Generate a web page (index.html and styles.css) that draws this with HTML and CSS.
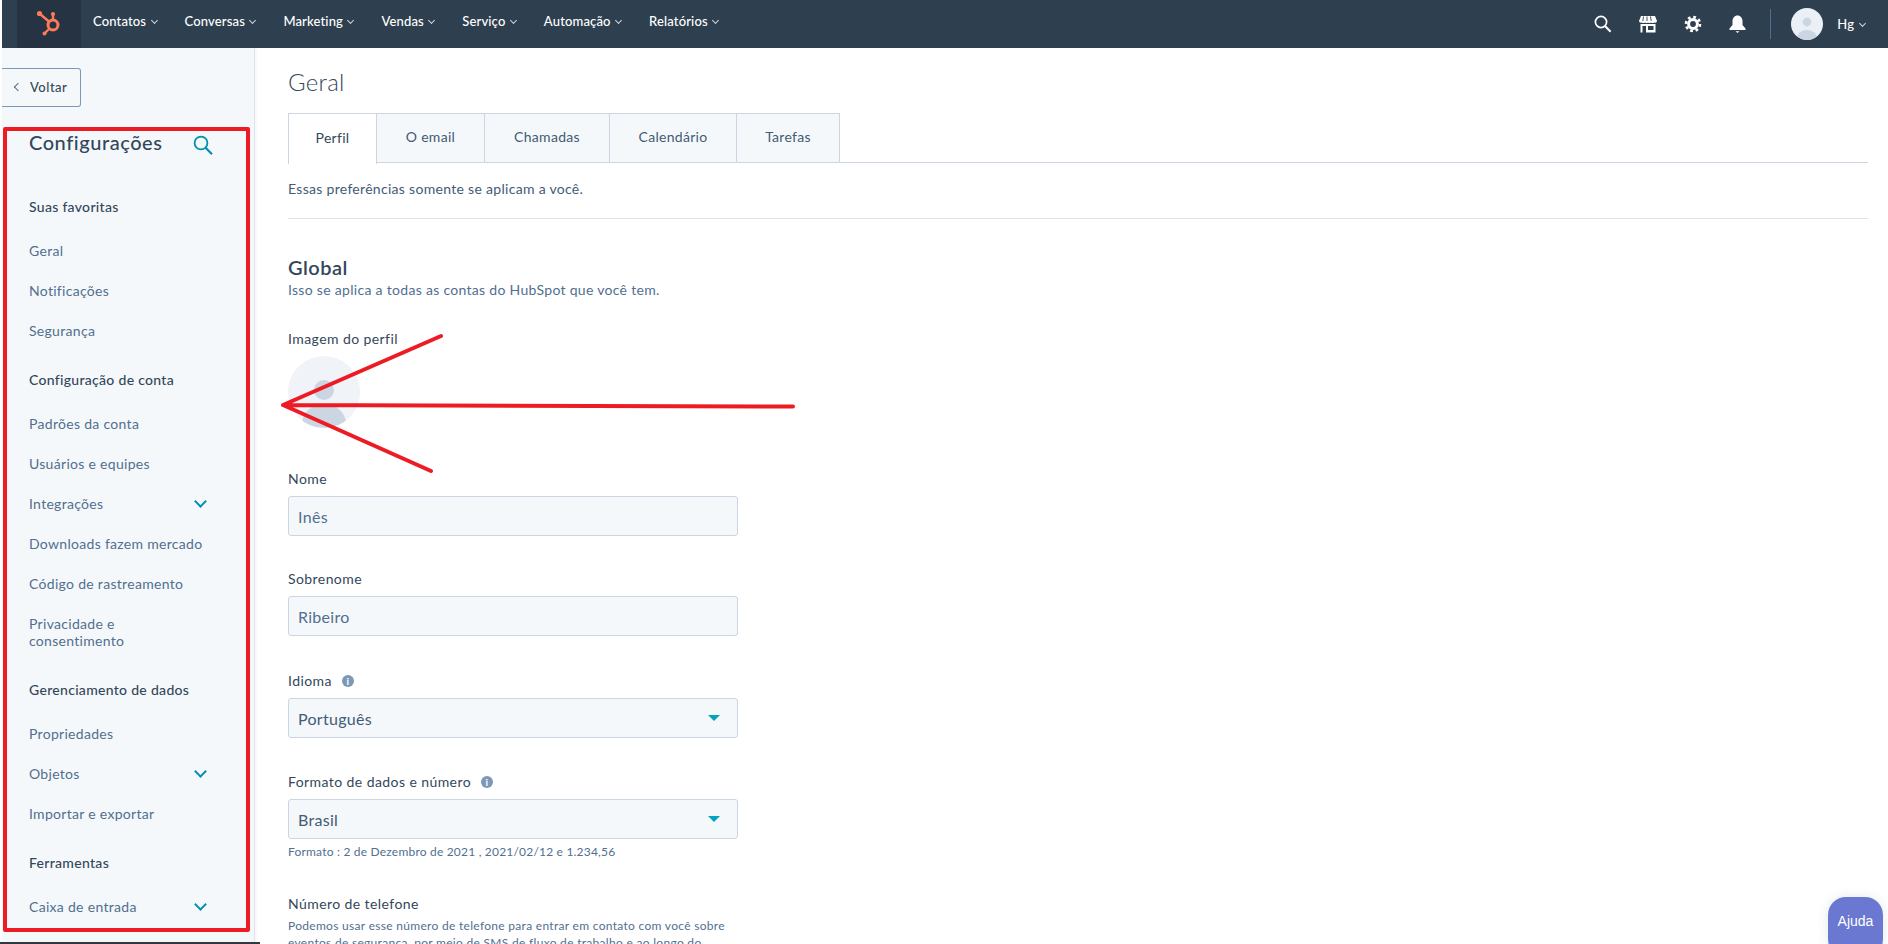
FILE: index.html
```html
<!DOCTYPE html>
<html lang="pt-BR">
<head>
  <meta charset="UTF-8" />
  <title>Geral</title>
  <link rel="stylesheet" href="styles.css">
</head>
<body>
  <header class="topbar">
    <div class="logo">
      <svg width="28" height="28" viewBox="0 0 28 28">
        <g stroke="#ff7a59" fill="none" stroke-width="2.4">
          <circle cx="17" cy="15" r="5" stroke-width="3"/>
          <path d="M4 4 L13 11.5 M17 4 V10 M9 23 L13.5 18.5"/>
        </g>
        <g fill="#ff7a59">
          <circle cx="3.5" cy="3.5" r="2.6"/>
          <circle cx="17" cy="4" r="2.1"/>
          <circle cx="8.5" cy="23.5" r="2"/>
        </g>
      </svg>
    </div>
    <nav class="mainnav">
      <a>Contatos <i class="caret"></i></a>
      <a>Conversas <i class="caret"></i></a>
      <a>Marketing <i class="caret"></i></a>
      <a>Vendas <i class="caret"></i></a>
      <a>Serviço <i class="caret"></i></a>
      <a>Automação <i class="caret"></i></a>
      <a>Relatórios <i class="caret"></i></a>
    </nav>
    <div class="tools">
      <svg class="tool" width="18" height="18" viewBox="0 0 18 18" fill="none" stroke="#fff" stroke-width="1.7">
        <circle cx="7" cy="7" r="5.6"/>
        <path d="M11 11 L16.6 16.8" stroke-width="2"/>
      </svg>
      <svg class="tool" width="18" height="17" viewBox="0 0 18 17" fill="#fff">
        <path d="M2 0 H16 L18 5 A2 2 0 0 1 15 6.4 A2.2 2.2 0 0 1 12 6.4 A2.2 2.2 0 0 1 9 6.4 A2.2 2.2 0 0 1 6 6.4 A2.2 2.2 0 0 1 3 6.4 A2 2 0 0 1 0 5 Z"/>
        <path d="M1.5 8 H16.5 V16.5 H1.5 Z M3.5 10 V16.5 H7 V10 Z M9 10 V14 H14.5 V10 Z" fill-rule="evenodd"/>
        <path d="M4.5 0.5 L3.8 5 M8 0.5 V5 M11.5 0.5 L12.2 5" stroke="#2e3f50" stroke-width="0.9"/>
      </svg>
      <svg class="tool" width="18" height="18" viewBox="0 0 18 18" fill="none" stroke="#fff">
        <circle cx="9" cy="9" r="4.4" stroke-width="3"/>
        <circle cx="9" cy="9" r="7" stroke-width="2.6" stroke-dasharray="2.8 2.7"/>
      </svg>
      <svg class="tool" width="17" height="19" viewBox="0 0 17 19" fill="#fff">
        <path d="M8.5 0.5 C11.5 0.5 13.5 3 13.5 6 V10 L16.5 13.6 V15 H0.5 V13.6 L3.5 10 V6 C3.5 3 5.5 0.5 8.5 0.5 Z"/>
        <path d="M6.5 16.3 H10.5 L8.5 18 Z"/>
      </svg>
      <span class="tools-sep"></span>
      <svg class="user-pic" width="32" height="32" viewBox="0 0 32 32">
        <defs><clipPath id="userclip"><circle cx="16" cy="16" r="16"/></clipPath></defs>
        <circle cx="16" cy="16" r="16" fill="#eaf0f6"/>
        <g clip-path="url(#userclip)" fill="#cbd6e2">
          <circle cx="16" cy="14" r="4.4"/>
          <ellipse cx="16" cy="30" rx="10" ry="8"/>
        </g>
      </svg>
      <span class="user-name">Hg <i class="caret"></i></span>
    </div>
  </header>

  <div class="layout">
    <aside class="sidebar">
      <a class="back"><i class="back-arrow"></i>Voltar</a>
      <div class="side-title">
        <h2>Configurações</h2>
        <svg width="20" height="20" viewBox="0 0 20 20" fill="none" stroke="#0091ae" stroke-width="1.8">
          <circle cx="8" cy="8" r="6.4"/>
          <path d="M12.6 12.8 L19 19.2" stroke-width="2.2"/>
        </svg>
      </div>
      <h3 class="side-head first">Suas favoritas</h3>
      <a class="side-item">Geral</a>
      <a class="side-item">Notificações</a>
      <a class="side-item">Segurança</a>
      <h3 class="side-head">Configuração de conta</h3>
      <a class="side-item">Padrões da conta</a>
      <a class="side-item">Usuários e equipes</a>
      <a class="side-item">Integrações <i class="side-caret"></i></a>
      <a class="side-item">Downloads fazem mercado</a>
      <a class="side-item">Código de rastreamento</a>
      <a class="side-item">Privacidade e<br>consentimento</a>
      <h3 class="side-head">Gerenciamento de dados</h3>
      <a class="side-item">Propriedades</a>
      <a class="side-item">Objetos <i class="side-caret"></i></a>
      <a class="side-item">Importar e exportar</a>
      <h3 class="side-head">Ferramentas</h3>
      <a class="side-item">Caixa de entrada <i class="side-caret"></i></a>
      <a class="side-item">Marketing</a>
    </aside>

    <main class="content">
      <h1 class="page-title">Geral</h1>
      <div class="tabs">
        <button class="tab active">Perfil</button>
        <button class="tab tab-email">O email</button>
        <button class="tab tab-calls">Chamadas</button>
        <button class="tab tab-cal">Calendário</button>
        <button class="tab tab-tasks">Tarefas</button>
      </div>
      <p class="note">Essas preferências somente se aplicam a você.</p>
      <hr class="rule">

      <h2 class="section-title">Global</h2>
      <p class="section-sub">Isso se aplica a todas as contas do HubSpot que você tem.</p>

      <div class="label">Imagem do perfil</div>
      <svg class="avatar" width="72" height="72" viewBox="0 0 72 72">
        <defs><clipPath id="avatarclip"><circle cx="36" cy="36" r="36"/></clipPath></defs>
        <circle cx="36" cy="36" r="36" fill="#f0f3f8"/>
        <g clip-path="url(#avatarclip)" fill="#cbd6e2">
          <circle cx="36" cy="34" r="10"/>
          <ellipse cx="36" cy="68" rx="22" ry="20"/>
        </g>
      </svg>

      <div class="field field-first">
        <div class="label">Nome</div>
        <div class="input">Inês</div>
      </div>
      <div class="field field-second">
        <div class="label">Sobrenome</div>
        <div class="input">Ribeiro</div>
      </div>
      <div class="field">
        <div class="label">Idioma <i class="info">i</i></div>
        <div class="input select">Português <i class="select-caret"></i></div>
      </div>
      <div class="field">
        <div class="label">Formato de dados e número <i class="info">i</i></div>
        <div class="input select">Brasil <i class="select-caret"></i></div>
        <div class="hint">Formato : 2 de Dezembro de 2021 , 2021/02/12 e 1.234,56</div>
      </div>
      <div class="field phone">
        <div class="label">Número de telefone</div>
        <p class="hint-block">Podemos usar esse número de telefone para entrar em contato com você sobre<br>eventos de segurança, por meio de SMS de fluxo de trabalho e ao longo do</p>
      </div>
    </main>
  </div>

  <div class="taskbar"></div>
  <button class="help">Ajuda</button>

  <!-- red markup drawn over the screenshot -->
  <div class="markup-box"></div>
  <svg class="markup-arrow" width="540" height="150" viewBox="0 0 540 150" fill="none" stroke="#ed1c24" stroke-width="4" stroke-linecap="round">
    <path d="M164 5 L6 74 L516 75.5 M6 74 L154 140"/>
  </svg>
</body>
</html>
```

FILE: styles.css
```css
* {
  box-sizing: border-box;
}
html, body {
  height: 944px;
  overflow: hidden;
}
body {
  margin: 0;
  padding-left: 2px;
  background: #fff;
  color: #33475b;
  font-family: "Lato", "Open Sans", sans-serif;
  font-size: 14px;
  letter-spacing: 0.3px;
}
i {
  font-style: normal;
}

/* top bar */
.topbar {
  display: flex;
  align-items: center;
  height: 48px;
  padding-left: 15px;
  background: #2e3f50;
  color: #fff;
}
.logo {
  display: flex;
  align-items: center;
  justify-content: center;
  width: 64px;
  height: 48px;
  background: #253342;
}
.logo svg {
  margin-left: 2px;
}
.mainnav {
  display: flex;
  margin-left: 12px;
  padding-bottom: 6px;
  font-size: 13px;
  font-weight: 500;
  letter-spacing: 0.15px;
}
.mainnav a {
  margin-right: 26px;
  white-space: nowrap;
}
.caret {
  display: inline-block;
  width: 5px;
  height: 5px;
  margin: 0 2px 3px 2px;
  border-right: 1px solid #cbd6e2;
  border-bottom: 1px solid #cbd6e2;
  transform: rotate(45deg);
}
.tools {
  display: flex;
  align-items: center;
  margin-left: auto;
  padding-right: 21px;
}
.tool {
  margin-right: 27px;
}
.tools-sep {
  width: 1px;
  height: 30px;
  margin-left: -3px;
  background: #516f90;
}
.user-pic {
  margin-left: 20px;
}
.user-name {
  margin-left: 14px;
  font-size: 13px;
  font-weight: 500;
}

.layout {
  display: flex;
  height: 896px;
}

/* left settings column */
.sidebar {
  flex: 0 0 253px;
  background: #f5f8fa;
  border-right: 1px solid #dfe3eb;
  box-shadow: 1px 0 3px rgba(45, 62, 80, 0.06);
  padding-top: 20px;
  overflow: hidden;
}
.back {
  display: flex;
  align-items: center;
  width: 79px;
  height: 39px;
  padding-bottom: 2px;
  background: #f5f8fa;
  border: 1px solid #7c98b6;
  border-left: none;
  border-radius: 0 3px 3px 0;
  color: #33475b;
  font-size: 13px;
  font-weight: 500;
  letter-spacing: 0.5px;
}
.back-arrow {
  width: 6px;
  height: 6px;
  margin: 0 9px 0 13px;
  border-left: 1px solid #506e91;
  border-bottom: 1px solid #506e91;
  transform: rotate(45deg);
}
.side-title {
  display: flex;
  align-items: center;
  justify-content: space-between;
  height: 32px;
  margin-top: 19px;
  padding: 0 41px 0 27px;
}
.side-title h2 {
  margin: 0;
  font-size: 20px;
  font-weight: 500;
  letter-spacing: 0.55px;
  color: #33475b;
}
.side-title svg {
  margin-top: 6px;
}
.side-head {
  margin: 10px 0 3px;
  padding: 0 27px;
  height: 40px;
  line-height: 40px;
  font-size: 14px;
  font-weight: 500;
  color: #33475b;
}
.side-head.first {
  margin-top: 29px;
}
.side-item {
  display: block;
  position: relative;
  padding: 11.5px 27px;
  line-height: 17px;
  font-size: 14px;
  color: #516f90;
}
.side-caret {
  position: absolute;
  right: 49px;
  top: 14px;
  width: 9px;
  height: 9px;
  border-right: 2px solid #0091ae;
  border-bottom: 2px solid #0091ae;
  transform: rotate(45deg);
}

/* main column */
.content {
  flex: 1;
  padding: 16px 20px 0 33px;
  overflow: hidden;
}
.page-title {
  margin: 0 0 13px;
  height: 36px;
  line-height: 36px;
  font-size: 24px;
  font-weight: 300;
  color: #33475b;
}
.tabs {
  display: flex;
  height: 50px;
  border-bottom: 1px solid #cbd6e2;
}
.tab {
  height: 50px;
  width: 88px;
  padding: 0 0 3px;
  border: 1px solid #cbd6e2;
  border-left: none;
  background: #f5f8fa;
  color: #425b76;
  font-family: inherit;
  font-size: 14px;
  letter-spacing: 0.3px;
}
.tab.active {
  width: 89px;
  border-left: 1px solid #cbd6e2;
  border-bottom: none;
  background: #fff;
  height: 51px;
  color: #33475b;
}
.tab-email {
  width: 108px;
}
.tab-calls {
  width: 125px;
}
.tab-cal {
  width: 127px;
}
.tab-tasks {
  width: 103px;
}
.note {
  margin: 14px 0 0;
  line-height: 24px;
  color: #425b76;
}
.rule {
  margin: 17px 0 0;
  border: none;
  border-top: 1px solid #dfe3eb;
}
.section-title {
  margin: 34px 0 0;
  line-height: 28px;
  font-size: 20px;
  font-weight: 600;
  letter-spacing: 0.5px;
}
.section-sub {
  margin: 0 0 28px;
  line-height: 18px;
  color: #516f90;
}
.label {
  height: 24px;
  line-height: 24px;
  margin-bottom: 5px;
  letter-spacing: 0.42px;
  color: #33475b;
}
.avatar {
  display: block;
  margin-bottom: 39px;
}
.field {
  margin-bottom: 32px;
}
.field-first {
  margin-bottom: 31px;
}
.field-second {
  margin-bottom: 33px;
}
.input {
  display: flex;
  align-items: center;
  justify-content: space-between;
  width: 450px;
  height: 40px;
  padding: 0 17px 0 9px;
  background: #f5f8fa;
  border: 1px solid #cbd6e2;
  border-radius: 3px;
  font-size: 16px;
  letter-spacing: 0.3px;
  color: #516f90;
}
.select {
  color: #425b76;
}
.select-caret {
  width: 0;
  height: 0;
  border-left: 6.5px solid transparent;
  border-right: 6.5px solid transparent;
  border-top: 6.5px solid #00a4bd;
}
.info {
  display: inline-block;
  width: 12px;
  height: 12px;
  margin-left: 6px;
  border-radius: 50%;
  background: #7c98b6;
  color: #fff;
  font-size: 10px;
  font-weight: 700;
  line-height: 12px;
  text-align: center;
  vertical-align: 1px;
}
.hint {
  margin-top: 5px;
  line-height: 16px;
  font-size: 12px;
  letter-spacing: 0.2px;
  color: #516f90;
}
.phone .label {
  margin-bottom: 1px;
}
.hint-block {
  margin: 0;
  line-height: 17px;
  font-size: 12px;
  color: #516f90;
}

/* things lying over the page */
.taskbar {
  position: absolute;
  left: 0;
  bottom: 0;
  width: 260px;
  height: 2px;
  background: #33383d;
}
.help {
  position: absolute;
  left: 1828px;
  top: 897px;
  width: 55px;
  height: 60px;
  padding: 0 0 13px;
  border: none;
  border-radius: 18px;
  background: #6a78d1;
  box-shadow: 0 0 12px rgba(45, 62, 80, 0.12);
  color: #fff;
  font-family: "Liberation Sans", sans-serif;
  font-size: 14px;
}
.markup-box {
  position: absolute;
  left: 3px;
  top: 127px;
  width: 247px;
  height: 805px;
  border: 4px solid #ed1c24;
  border-radius: 2px;
}
.markup-arrow {
  position: absolute;
  left: 277px;
  top: 331px;
}
```
